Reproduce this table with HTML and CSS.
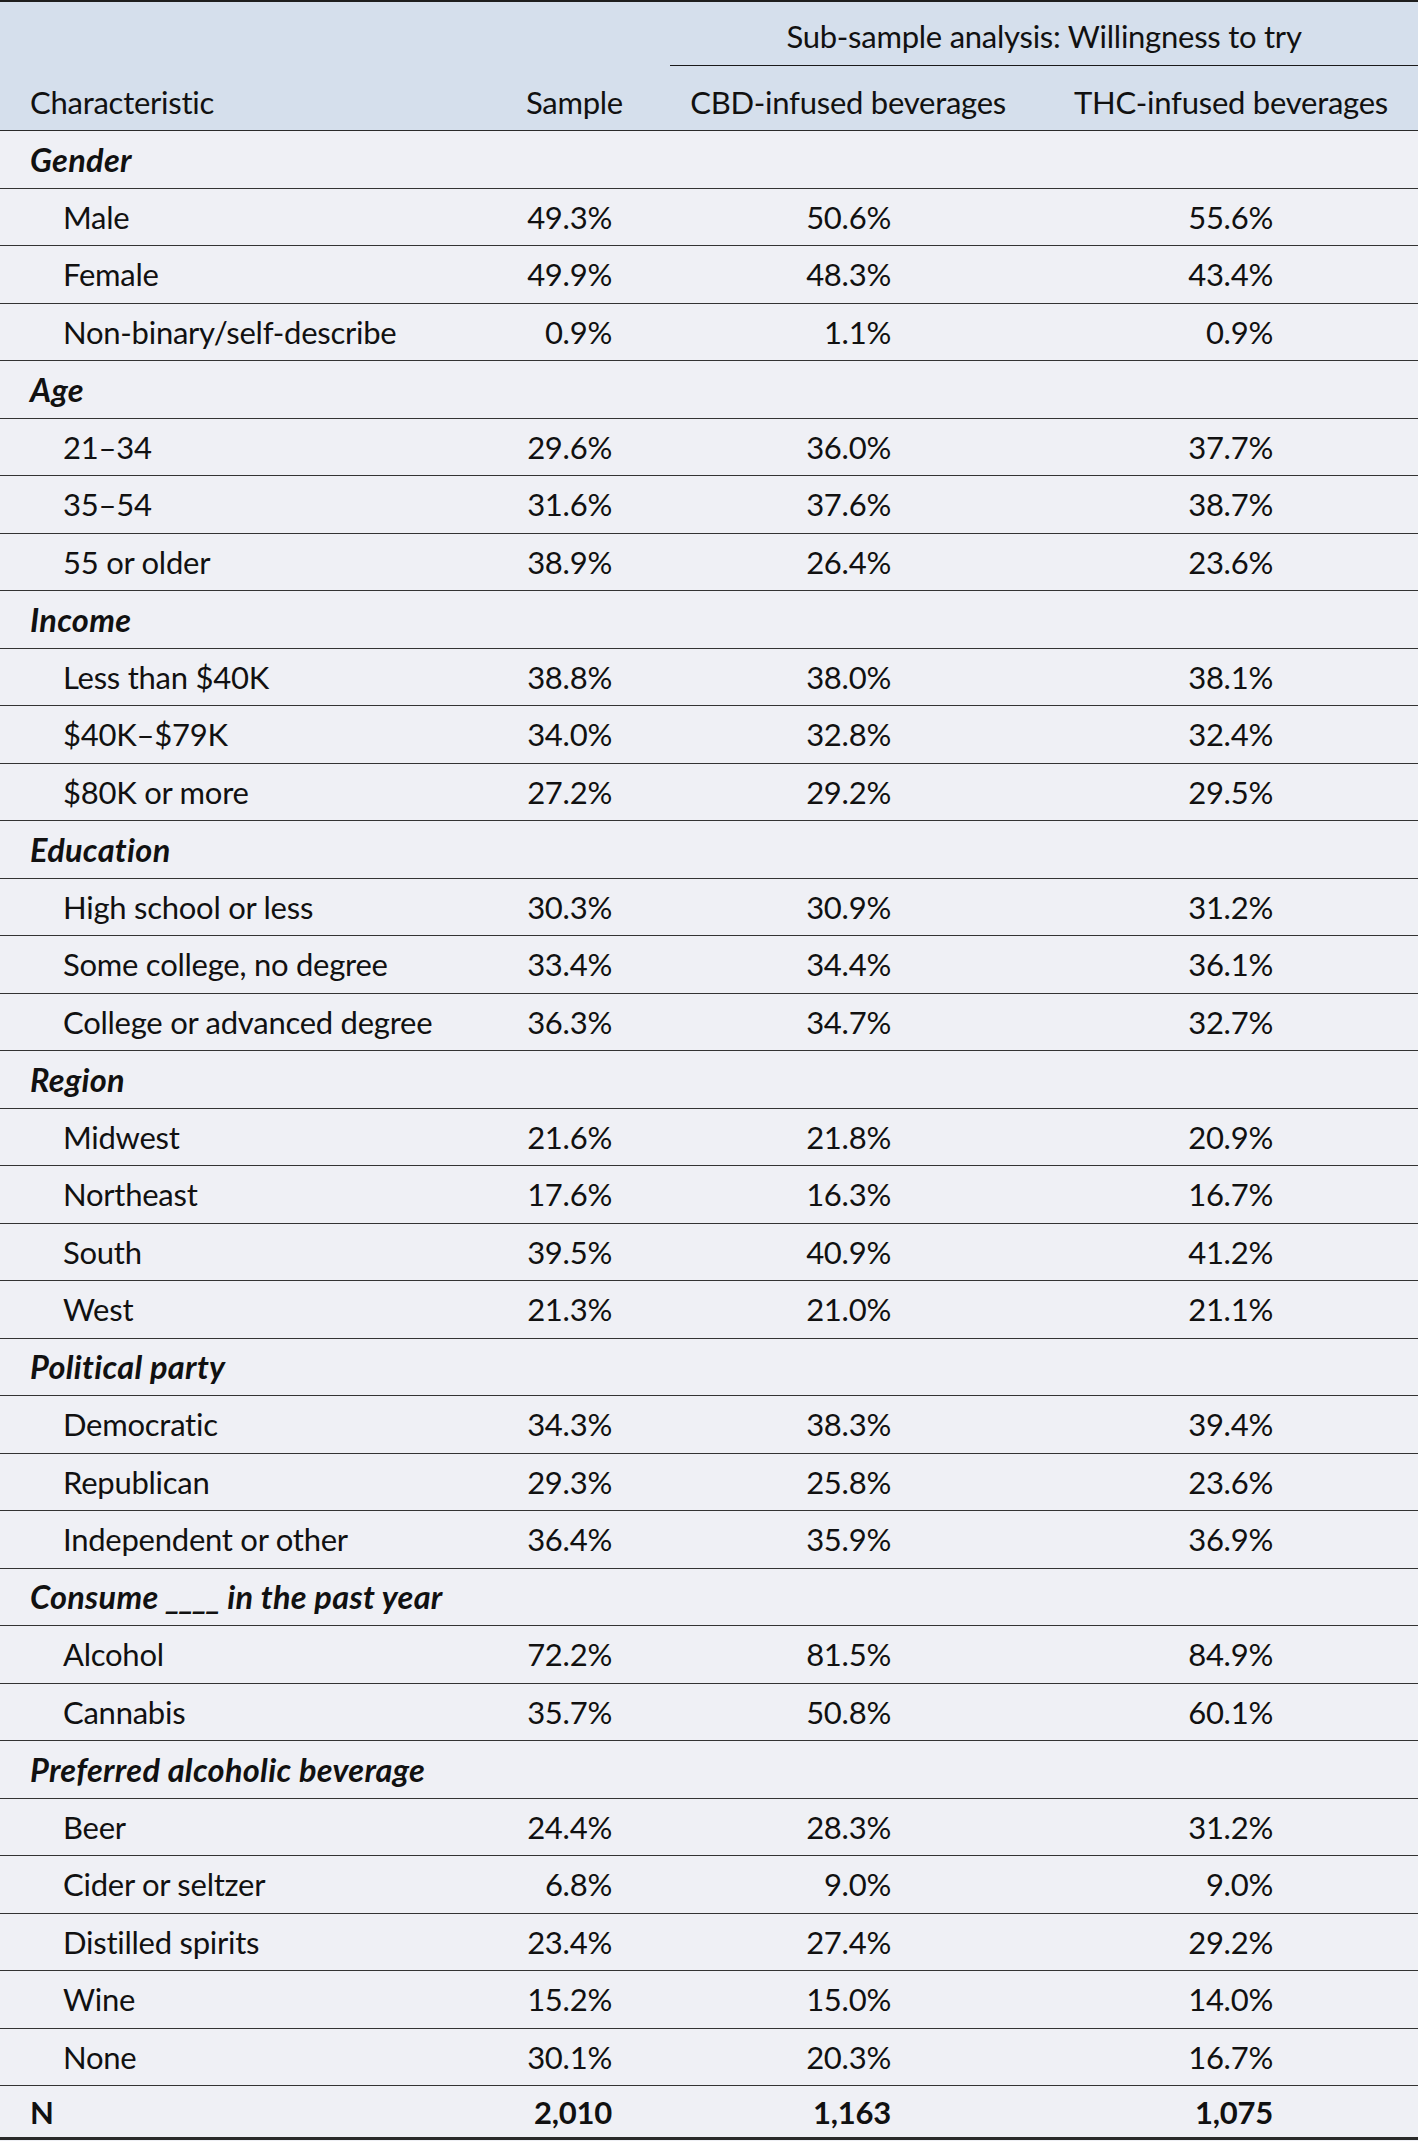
FILE: index.html
```html
<!DOCTYPE html>
<html>
<head>
<meta charset="utf-8">
<link rel="stylesheet" href="styles.css">
</head>
<body>
<table class="tbl">
<colgroup>
<col class="c1"><col class="c2"><col class="c3"><col class="c4">
</colgroup>
<thead>
<tr class="h1">
<th class="lab"></th><th></th>
<th colspan="2" class="span"><div class="span-in">Sub-sample analysis: Willingness to try</div></th>
</tr>
<tr class="h2">
<th class="lab">Characteristic</th>
<th class="num">Sample</th>
<th class="num">CBD-infused beverages</th>
<th class="num">THC-infused beverages</th>
</tr>
</thead>
<tbody>
<tr class="grp"><td class="lab">Gender</td><td></td><td></td><td></td></tr>
<tr><td class="sub">Male</td><td class="v1">49.3%</td><td class="v2">50.6%</td><td class="v2">55.6%</td></tr>
<tr><td class="sub">Female</td><td class="v1">49.9%</td><td class="v2">48.3%</td><td class="v2">43.4%</td></tr>
<tr><td class="sub">Non-binary/self-describe</td><td class="v1">0.9%</td><td class="v2">1.1%</td><td class="v2">0.9%</td></tr>
<tr class="grp"><td class="lab">Age</td><td></td><td></td><td></td></tr>
<tr><td class="sub">21–34</td><td class="v1">29.6%</td><td class="v2">36.0%</td><td class="v2">37.7%</td></tr>
<tr><td class="sub">35–54</td><td class="v1">31.6%</td><td class="v2">37.6%</td><td class="v2">38.7%</td></tr>
<tr><td class="sub">55 or older</td><td class="v1">38.9%</td><td class="v2">26.4%</td><td class="v2">23.6%</td></tr>
<tr class="grp"><td class="lab">Income</td><td></td><td></td><td></td></tr>
<tr><td class="sub">Less than $40K</td><td class="v1">38.8%</td><td class="v2">38.0%</td><td class="v2">38.1%</td></tr>
<tr><td class="sub">$40K–$79K</td><td class="v1">34.0%</td><td class="v2">32.8%</td><td class="v2">32.4%</td></tr>
<tr><td class="sub">$80K or more</td><td class="v1">27.2%</td><td class="v2">29.2%</td><td class="v2">29.5%</td></tr>
<tr class="grp"><td class="lab">Education</td><td></td><td></td><td></td></tr>
<tr><td class="sub">High school or less</td><td class="v1">30.3%</td><td class="v2">30.9%</td><td class="v2">31.2%</td></tr>
<tr><td class="sub">Some college, no degree</td><td class="v1">33.4%</td><td class="v2">34.4%</td><td class="v2">36.1%</td></tr>
<tr><td class="sub">College or advanced degree</td><td class="v1">36.3%</td><td class="v2">34.7%</td><td class="v2">32.7%</td></tr>
<tr class="grp"><td class="lab">Region</td><td></td><td></td><td></td></tr>
<tr><td class="sub">Midwest</td><td class="v1">21.6%</td><td class="v2">21.8%</td><td class="v2">20.9%</td></tr>
<tr><td class="sub">Northeast</td><td class="v1">17.6%</td><td class="v2">16.3%</td><td class="v2">16.7%</td></tr>
<tr><td class="sub">South</td><td class="v1">39.5%</td><td class="v2">40.9%</td><td class="v2">41.2%</td></tr>
<tr><td class="sub">West</td><td class="v1">21.3%</td><td class="v2">21.0%</td><td class="v2">21.1%</td></tr>
<tr class="grp"><td class="lab">Political party</td><td></td><td></td><td></td></tr>
<tr><td class="sub">Democratic</td><td class="v1">34.3%</td><td class="v2">38.3%</td><td class="v2">39.4%</td></tr>
<tr><td class="sub">Republican</td><td class="v1">29.3%</td><td class="v2">25.8%</td><td class="v2">23.6%</td></tr>
<tr><td class="sub">Independent or other</td><td class="v1">36.4%</td><td class="v2">35.9%</td><td class="v2">36.9%</td></tr>
<tr class="grp"><td class="lab">Consume <span class="blank">____</span> in the past year</td><td></td><td></td><td></td></tr>
<tr><td class="sub">Alcohol</td><td class="v1">72.2%</td><td class="v2">81.5%</td><td class="v2">84.9%</td></tr>
<tr><td class="sub">Cannabis</td><td class="v1">35.7%</td><td class="v2">50.8%</td><td class="v2">60.1%</td></tr>
<tr class="grp"><td class="lab">Preferred alcoholic beverage</td><td></td><td></td><td></td></tr>
<tr><td class="sub">Beer</td><td class="v1">24.4%</td><td class="v2">28.3%</td><td class="v2">31.2%</td></tr>
<tr><td class="sub">Cider or seltzer</td><td class="v1">6.8%</td><td class="v2">9.0%</td><td class="v2">9.0%</td></tr>
<tr><td class="sub">Distilled spirits</td><td class="v1">23.4%</td><td class="v2">27.4%</td><td class="v2">29.2%</td></tr>
<tr><td class="sub">Wine</td><td class="v1">15.2%</td><td class="v2">15.0%</td><td class="v2">14.0%</td></tr>
<tr><td class="sub">None</td><td class="v1">30.1%</td><td class="v2">20.3%</td><td class="v2">16.7%</td></tr>
<tr class="tot"><td class="lab">N</td><td class="v1">2,010</td><td class="v2">1,163</td><td class="v2">1,075</td></tr>
</tbody>
</table>
</body>
</html>
```

FILE: styles.css
```css
html, body {
  margin: 0;
  padding: 0;
  background: #eff0f5;
}
.tbl {
  width: 1418px;
  table-layout: fixed;
  border-collapse: separate;
  border-spacing: 0;
  border-top: 2px solid #1e1e1e;
  border-bottom: 3px solid #2a2a2a;
  font-family: Lato, "Liberation Sans", sans-serif;
  font-size: 31px;
  letter-spacing: -0.25px;
  color: #111;
  background: #eff0f5;
}
.c1 { width: 500px; }
.c2 { width: 153px; }
.c3 { width: 383px; }
.c4 { width: 382px; }
th {
  font-weight: normal;
  background: #d5dfec;
  padding: 0;
}
.h1 th {
  height: 64px;
  vertical-align: bottom;
}
.span-in {
  margin-left: 17px;
  border-bottom: 1px solid #1a1a1a;
  text-align: center;
  height: 63px;
  padding-top: 5px;
  line-height: 56px;
  box-sizing: border-box;
}
.h2 th {
  height: 65px;
  border-bottom: 1px solid #2a2a2a;
  box-sizing: border-box;
  padding-top: 8px;
}
th.lab { text-align: left; padding-left: 30px; }
th.num { text-align: right; padding-right: 30px; }
td {
  height: 57.5px;
  box-sizing: border-box;
  border-bottom: 1px solid #333;
  padding: 0;
  vertical-align: middle;
  white-space: nowrap;
}
.tot td { height: 51px; border-bottom: none; font-weight: bold; }
td.lab { padding-left: 30px; }
.grp td.lab {
  font-weight: bold;
  font-style: italic;
  font-size: 32.5px;
  letter-spacing: 0.3px;
}
.blank { letter-spacing: -1px; }
td.sub { padding-left: 63px; }
td.v1 { text-align: right; padding-right: 41px; }
td.v2 { text-align: right; padding-right: 145px; }
```
